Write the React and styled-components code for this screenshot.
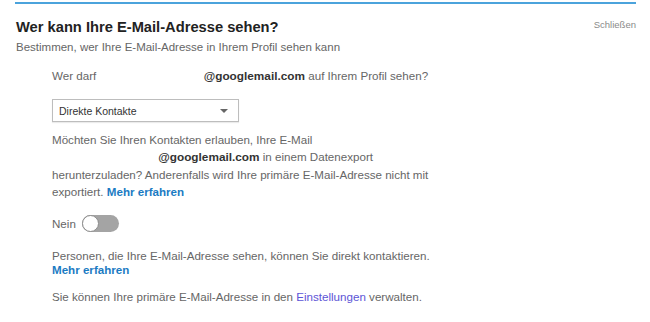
import React, { useState } from 'react'
import styled, { createGlobalStyle } from 'styled-components'

const GlobalStyle = createGlobalStyle`
  body {
    margin: 0;
    background: #fff;
    font-family: "Liberation Sans", Arial, sans-serif;
  }
`

function App() {
  const [choice, setChoice] = useState('Direkte Kontakte')
  const [exportOn, setExportOn] = useState(false)

  return (
    <>
      <GlobalStyle />
      <Panel>
        <Header>
          <div>
            <Title>Wer kann Ihre E-Mail-Adresse sehen?</Title>
            <Subtitle>Bestimmen, wer Ihre E-Mail-Adresse in Ihrem Profil sehen kann</Subtitle>
          </div>
          <Close type="button">Schließen</Close>
        </Header>

        <Body>
          <Text>
            Wer darf <Redacted $w={101} /> <Strong>@googlemail.com</Strong> auf Ihrem Profil sehen?
          </Text>

          <SelectBox>
            <span>{choice}</span>
            <Caret />
            <select value={choice} onChange={e => setChoice(e.target.value)}>
              <option>Direkte Kontakte</option>
              <option>Alle</option>
              <option>Nur ich</option>
            </select>
          </SelectBox>

          <Para>
            Möchten Sie Ihren Kontakten erlauben, Ihre E-Mail<br />
            <Redacted $w={103} /> <Strong>@googlemail.com</Strong> in einem Datenexport<br />
            herunterzuladen? Anderenfalls wird Ihre primäre E-Mail-Adresse nicht mit<br />
            exportiert. <Link href="#">Mehr erfahren</Link>
          </Para>

          <ToggleRow>
            <span>{exportOn ? 'Ja' : 'Nein'}</span>
            <Toggle type="button" $on={exportOn} onClick={() => setExportOn(!exportOn)}>
              <Knob $on={exportOn} />
            </Toggle>
          </ToggleRow>

          <Para $tight>
            Personen, die Ihre E-Mail-Adresse sehen, können Sie direkt kontaktieren.<br />
            <Link href="#">Mehr erfahren</Link>
          </Para>

          <Note>
            Sie können Ihre primäre E-Mail-Adresse in den <Settings href="#">Einstellungen</Settings> verwalten.
          </Note>
        </Body>
      </Panel>
    </>
  )
}

const Panel = styled.div`
  margin: 2px 14px 0 15px;
  border-top: 2px solid #4ba3dc;
`

const Header = styled.div`
  display: flex;
  justify-content: space-between;
  align-items: flex-start;
  padding: 14px 0 0 1px;
`

const Title = styled.h2`
  margin: 0;
  font-size: 14.7px;
  line-height: 18px;
  font-weight: 700;
  color: #222;
`

const Subtitle = styled.p`
  margin: 4px 0 0;
  font-size: 11.5px;
  line-height: 14px;
  color: #666;
`

const Close = styled.button`
  border: 0;
  background: none;
  padding: 0;
  margin-top: 1px;
  font-family: inherit;
  font-size: 9.5px;
  color: #8a8a8a;
  cursor: pointer;
`

const Body = styled.div`
  padding: 15px 0 0 37px;
  font-size: 11.6px;
  color: #666;
`

const Text = styled.p`
  margin: 0;
  line-height: 14px;
`

const Strong = styled.b`
  color: #333;
  font-size: 11.8px;
`

const Redacted = styled.span`
  display: inline-block;
  width: ${p => p.$w}px;
`

const SelectBox = styled.label`
  position: relative;
  display: flex;
  align-items: center;
  justify-content: space-between;
  box-sizing: border-box;
  width: 187px;
  height: 23px;
  margin-top: 16px;
  padding: 0 10px 0 6px;
  border: 1px solid #bdbdbd;
  box-shadow: 0 1px 1px rgba(0, 0, 0, 0.08);
  font-size: 10.5px;
  color: #333;

  select {
    position: absolute;
    inset: 0;
    opacity: 0;
    cursor: pointer;
  }
`

const Caret = styled.i`
  width: 0;
  height: 0;
  border-left: 4px solid transparent;
  border-right: 4px solid transparent;
  border-top: 4px solid #666;
`

const Para = styled.p`
  margin: ${p => (p.$tight ? '17px' : '9px')} 0 0;
  line-height: ${p => (p.$tight ? '14px' : '17px')};
`

const Link = styled.a`
  color: #1b7bc3;
  font-weight: 700;
  text-decoration: none;
`

const Settings = styled.a`
  color: #5c54d6;
  text-decoration: none;
`

const ToggleRow = styled.div`
  display: flex;
  align-items: center;
  gap: 6px;
  margin-top: 15px;
`

const Toggle = styled.button`
  position: relative;
  width: 37px;
  height: 17px;
  padding: 0;
  border: 0;
  border-radius: 9px;
  background: ${p => (p.$on ? '#1b7bc3' : '#a4a4a4')};
  cursor: pointer;
`

const Knob = styled.span`
  position: absolute;
  top: 0;
  left: ${p => (p.$on ? '20px' : '0')};
  box-sizing: border-box;
  width: 17px;
  height: 17px;
  border-radius: 50%;
  background: #fff;
  border: 1px solid #8c8c8c;
`

const Note = styled.p`
  margin: 11px 0 0;
  line-height: 17px;
`

export default App
